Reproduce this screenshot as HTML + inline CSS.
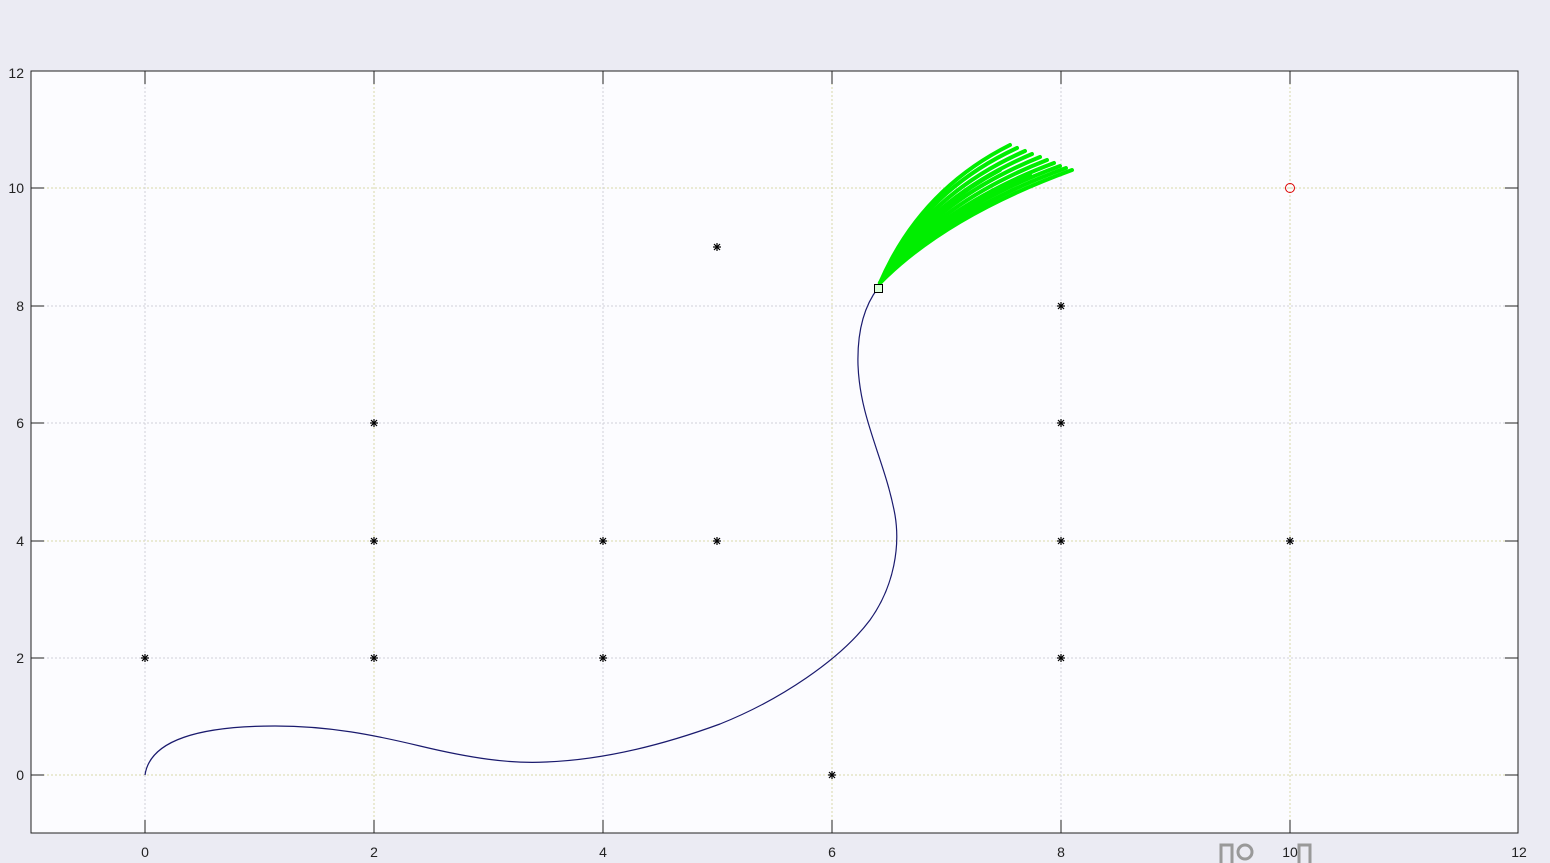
<!DOCTYPE html>
<html><head><style>
body{margin:0;width:1550px;height:863px;background:#ebebf3;overflow:hidden}
svg{display:block}
text{font-family:"Liberation Sans",sans-serif;font-size:14px;fill:#222}
</style></head><body>
<svg width="1550" height="863" viewBox="0 0 1550 863">
<defs><g id="s" stroke="#000" stroke-width="1.2"><line x1="-4" y1="0" x2="4" y2="0"/><line x1="0" y1="-4" x2="0" y2="4"/><line x1="-3" y1="-3" x2="3" y2="3"/><line x1="-3" y1="3" x2="3" y2="-3"/></g></defs>
<rect x="31" y="71" width="1487" height="762" fill="#fcfcff" stroke="#222" stroke-width="1"/>
<g stroke-width="1" stroke-dasharray="2,2">
<g stroke="#d8d8a8">
<line x1="374" y1="71" x2="374" y2="833"/><line x1="832" y1="71" x2="832" y2="833"/><line x1="1290" y1="71" x2="1290" y2="833"/>
<line x1="31" y1="188" x2="1518" y2="188"/><line x1="31" y1="541" x2="1518" y2="541"/><line x1="31" y1="775" x2="1518" y2="775"/>
</g>
<g stroke="#d0d0d8">
<line x1="145" y1="71" x2="145" y2="833"/><line x1="603" y1="71" x2="603" y2="833"/><line x1="1061" y1="71" x2="1061" y2="833"/>
<line x1="31" y1="306" x2="1518" y2="306"/><line x1="31" y1="423" x2="1518" y2="423"/><line x1="31" y1="658" x2="1518" y2="658"/>
</g>
</g>
<g stroke="#222">
<line x1="145" y1="833" x2="145" y2="820"/><line x1="374" y1="833" x2="374" y2="820"/><line x1="603" y1="833" x2="603" y2="820"/><line x1="832" y1="833" x2="832" y2="820"/><line x1="1061" y1="833" x2="1061" y2="820"/><line x1="1290" y1="833" x2="1290" y2="820"/>
<line x1="145" y1="71" x2="145" y2="84"/><line x1="374" y1="71" x2="374" y2="84"/><line x1="603" y1="71" x2="603" y2="84"/><line x1="832" y1="71" x2="832" y2="84"/><line x1="1061" y1="71" x2="1061" y2="84"/><line x1="1290" y1="71" x2="1290" y2="84"/>
<line x1="31" y1="188" x2="44" y2="188"/><line x1="31" y1="306" x2="44" y2="306"/><line x1="31" y1="423" x2="44" y2="423"/><line x1="31" y1="541" x2="44" y2="541"/><line x1="31" y1="658" x2="44" y2="658"/><line x1="31" y1="775" x2="44" y2="775"/>
<line x1="1518" y1="188" x2="1505" y2="188"/><line x1="1518" y1="306" x2="1505" y2="306"/><line x1="1518" y1="423" x2="1505" y2="423"/><line x1="1518" y1="541" x2="1505" y2="541"/><line x1="1518" y1="658" x2="1505" y2="658"/><line x1="1518" y1="775" x2="1505" y2="775"/>
</g>
<g text-anchor="middle">
<text x="145" y="857">0</text><text x="374" y="857">2</text><text x="603" y="857">4</text><text x="832" y="857">6</text><text x="1061" y="857">8</text><text x="1290" y="857">10</text><text x="1519" y="857">12</text>
</g>
<g text-anchor="end">
<text x="24" y="78">12</text><text x="24" y="193">10</text><text x="24" y="311">8</text><text x="24" y="428">6</text><text x="24" y="546">4</text><text x="24" y="663">2</text><text x="24" y="780">0</text>
</g>
<path d="M145,775 C150,740 200,726 275,726 C330,726 374,735 420,746 C470,758 510,764 546,762 C600,760 660,746 720,724 C780,700 840,660 870,620 C895,585 900,545 895,515 C885,460 860,420 858,365 C857,330 865,305 878,288" fill="none" stroke="#1a1a6e" stroke-width="1.2"/>
<g fill="none" stroke="#00ee00" stroke-width="4" stroke-linecap="round">
<path d="M880,283 Q920,190 1010,145"/>
<path d="M880,283 Q922,192 1017,148"/>
<path d="M880,283 Q925,195 1025,151"/>
<path d="M880,283 Q928,198 1032,154"/>
<path d="M880,283 Q931,201 1040,157"/>
<path d="M880,283 Q934,204 1047,160"/>
<path d="M880,283 Q937,207 1054,163"/>
<path d="M880,283 Q940,210 1060,166"/>
<path d="M880,283 Q943,213 1066,168"/>
<path d="M880,283 Q946,216 1072,170"/>
<path d="M882,280 Q925,210 1000,170"/>
<path d="M882,280 Q935,215 1030,175"/>
</g>
<rect x="874.5" y="284.5" width="8" height="8" fill="#dfd" stroke="#000"/>
<circle cx="1290" cy="188" r="4.5" fill="none" stroke="#d00"/>
<use href="#s" x="717" y="247"/><use href="#s" x="1061" y="306"/>
<use href="#s" x="374" y="423"/><use href="#s" x="1061" y="423"/>
<use href="#s" x="374" y="541"/><use href="#s" x="603" y="541"/><use href="#s" x="717" y="541"/><use href="#s" x="1061" y="541"/><use href="#s" x="1290" y="541"/>
<use href="#s" x="145" y="658"/><use href="#s" x="374" y="658"/><use href="#s" x="603" y="658"/><use href="#s" x="1061" y="658"/>
<use href="#s" x="832" y="775"/>
<g fill="none" stroke="#999" stroke-width="3">
<path d="M1221,863 V845 H1232 V863"/>
<circle cx="1245" cy="852" r="7"/>
<path d="M1299,863 V845 H1310 V863"/>
</g>
</svg>
</body></html>
